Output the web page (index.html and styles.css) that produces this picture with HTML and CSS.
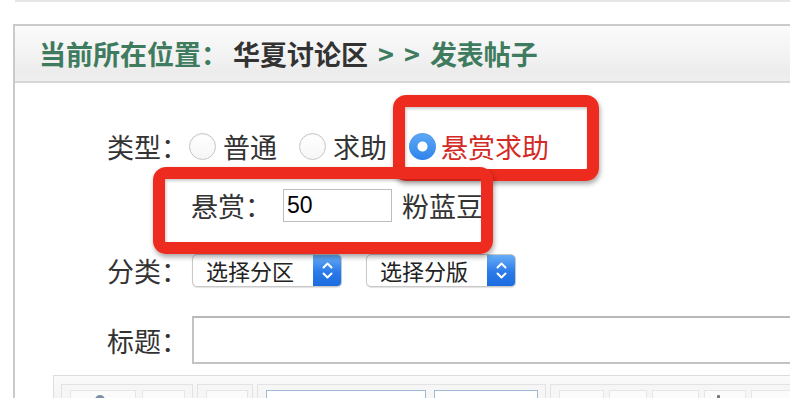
FILE: index.html
```html
<!DOCTYPE html>
<html lang="zh-CN">
<head>
<meta charset="utf-8">
<title>发表帖子</title>
<link rel="stylesheet" href="styles.css">
</head>
<body>
<div class="topbar"></div>
<div class="panel">
  <div class="crumb"><span class="green">当前所在位置：</span><span class="dark">华夏讨论区</span><span class="green sep">&gt;</span><span class="green sep">&gt;</span><span class="green sep">发表帖子</span></div>
  <div class="form">
    <div class="row row-type">
      <span class="label">类型：</span>
      <label class="opt"><span class="radio"></span><span>普通</span></label>
      <label class="opt"><span class="radio"></span><span>求助</span></label>
      <label class="opt opt-on"><span class="radio radio-on"></span><span>悬赏求助</span></label>
    </div>
    <div class="row row-reward">
      <span class="label">悬赏：</span>
      <input class="reward-input" type="text" value="50">
      <span class="unit">粉蓝豆</span>
    </div>
    <div class="row row-cat">
      <span class="label">分类：</span>
      <div class="select">
        <span class="select-text">选择分区</span>
        <span class="select-btn"><svg width="29" height="33" viewBox="0 0 29 33"><path d="M10.5 13.5 L14.5 9.5 L18.5 13.5" fill="none" stroke="#fff" stroke-width="2" stroke-linecap="round" stroke-linejoin="round"/><path d="M10.5 19.5 L14.5 23.5 L18.5 19.5" fill="none" stroke="#fff" stroke-width="2" stroke-linecap="round" stroke-linejoin="round"/></svg></span>
      </div>
      <div class="select select-2">
        <span class="select-text">选择分版</span>
        <span class="select-btn"><svg width="29" height="33" viewBox="0 0 29 33"><path d="M10.5 13.5 L14.5 9.5 L18.5 13.5" fill="none" stroke="#fff" stroke-width="2" stroke-linecap="round" stroke-linejoin="round"/><path d="M10.5 19.5 L14.5 23.5 L18.5 19.5" fill="none" stroke="#fff" stroke-width="2" stroke-linecap="round" stroke-linejoin="round"/></svg></span>
      </div>
    </div>
    <div class="row row-title">
      <span class="label">标题：</span>
      <input class="title-input" type="text" value="">
    </div>
    <div class="toolbar">
      <div class="tgroup tg1">
        <span class="tbtn tb-a"><span class="ticon"></span></span>
        <span class="tbtn tb-b"></span>
      </div>
      <div class="tgroup tg2"><span class="tbtn tb-c"></span></div>
      <div class="tgroup tg3">
        <span class="tsel ts1"></span>
        <span class="tsel ts2"></span>
      </div>
      <div class="tgroup tg4">
        <span class="tbtn tb-s"></span>
        <span class="tbtn tb-s tb-s2"></span>
        <span class="tbtn tb-s tb-s3"></span>
        <span class="tbtn tb-s tb-s4"><span class="tglyph"></span></span>
        <span class="tbtn tb-s tb-s5"></span>
      </div>
    </div>
  </div>
</div>
<div class="mark mark-1"></div>
<div class="mark mark-2"></div>
</body>
</html>
```
FILE: styles.css
```css
html, body {
  margin: 0;
  padding: 0;
  background: #fff;
  overflow: hidden;
}
body {
  width: 790px;
  height: 398px;
  position: relative;
  font-family: "Noto Sans CJK SC", "Liberation Sans", sans-serif;
  color: #333;
}
.topbar {
  margin-left: 15px;
  height: 0;
  border-bottom: 2px solid #e6e6e6;
}
.panel {
  margin-top: 22px;
  margin-left: 13px;
  width: 1000px;
  border: 2px solid #cacaca;
  border-right: none;
  border-bottom: none;
  height: 400px;
}
.crumb {
  height: 55px;
  line-height: 55px;
  padding-left: 24px;
  font-size: 27px;
  font-weight: 700;
  background: linear-gradient(#fbfbfb, #f4f4f4 45%, #ececec 85%, #f0f0f0);
  border-bottom: 2px solid #d6d6d6;
  white-space: nowrap;
}
.crumb .green { color: #3f7b5e; }
.crumb .dark { color: #333; margin-left: 5px; }
.crumb .sep { margin-left: 10px; }
.form {
  padding-top: 43px;
}
.row {
  display: flex;
  align-items: center;
  height: 40px;
  padding-left: 92px;
  font-size: 27px;
}
.label {
  width: 81px;
  flex: none;
  white-space: nowrap;
}
.opt {
  display: flex;
  align-items: center;
  margin-right: 22px;
}
.opt-on { color: #d42a25; margin-right: 0; }
.radio {
  width: 25px;
  height: 25px;
  border-radius: 50%;
  border: 1px solid #c6c6c6;
  background: linear-gradient(#ffffff, #f6f6f6);
  box-shadow: inset 0 1px 1px rgba(0,0,0,0.05);
  margin-left: 1px;
  margin-right: 7px;
  flex: none;
}
.opt + .opt .radio { margin-left: 0; }
.opt-on .radio { margin-left: 2px; }
.radio-on {
  width: 27px;
  height: 27px;
  border: none;
  background: radial-gradient(circle, #fff 0 4.5px, transparent 5.5px), linear-gradient(#5ea9f6, #2f83ea);
  margin-right: 5px;
}
.row-type { margin-bottom: 19px; }
.row-reward {
  padding-left: 176px;
  margin-bottom: 25px;
}
.reward-input {
  margin-left: 11px;
  width: 109px;
  height: 33px;
  box-sizing: border-box;
  border: 1px solid #bdbdbd;
  padding: 0 3px;
  font-family: "Liberation Sans", sans-serif;
  font-size: 23px;
  color: #000;
  outline: none;
}
.unit { margin-left: 10px; }
.row-cat { margin-bottom: 26px; }
.select {
  margin-left: 4px;
  width: 150px;
  height: 33px;
  box-sizing: border-box;
  display: flex;
  align-items: center;
  justify-content: space-between;
  border: 1px solid #c8c8c8;
  border-radius: 5px;
  background: #fff;
  box-shadow: 0 1px 1px rgba(0,0,0,0.12);
  overflow: hidden;
}
.select-2 { margin-left: 24px; }
.select-text {
  font-size: 22px;
  padding-left: 13px;
  color: #222;
  line-height: 31px;
}
.select-btn {
  width: 29px;
  height: 33px;
  margin-right: -1px;
  background: linear-gradient(#6cb0f8, #2a7ae8 55%, #1a6be0);
  display: flex;
}
.row-title {
  height: 48px;
  margin-bottom: 11px;
}
.title-input {
  margin-left: 4px;
  width: 700px;
  height: 48px;
  box-sizing: border-box;
  border: 2px solid #c3c3c3;
  border-top-color: #b8b8b8;
  outline: none;
  font-size: 20px;
}
.toolbar {
  margin-left: 38px;
  height: 40px;
  border: 1px solid #dddddd;
  border-right: none;
  background: linear-gradient(#fafafa, #efefef);
  display: flex;
  gap: 4px;
  padding: 8px 0 0 7px;
}
.tgroup {
  height: 34px;
  border: 1px solid #e3e3e3;
  background: #f6f6f6;
  display: flex;
  gap: 6px;
  padding: 5px 0 0 8px;
  box-sizing: border-box;
}
.tg1 { width: 132px; }
.tg2 { width: 56px; }
.tg3 { width: 289px; gap: 8px; }
.tg4 { width: 300px; gap: 5px; }
.tbtn {
  display: block;
  height: 24px;
  border: 1px solid #e6e6e6;
  background: #fbfbfb;
  position: relative;
}
.tb-a { width: 64px; }
.tb-b { width: 41px; }
.tb-c { width: 40px; }
.tb-s { width: 43px; }
.tb-s2 { width: 36px; }
.tb-s3 { width: 45px; }
.tb-s4 { width: 40px; }
.tb-s5 { width: 42px; }
.ticon {
  position: absolute;
  left: 24px;
  top: 4px;
  width: 10px;
  height: 10px;
  border-radius: 50%;
  background: #7c8fa6;
}
.tglyph {
  position: absolute;
  left: 12px;
  top: 4px;
  width: 3px;
  height: 6px;
  background: #777;
  border-radius: 1px;
}
.tsel {
  display: block;
  height: 24px;
  border: 1px solid #9fb8d6;
  background: #fff;
}
.ts1 { width: 158px; }
.ts2 { width: 102px; }
.mark {
  position: absolute;
  box-sizing: border-box;
  border: 12px solid #ee2b1f;
  border-radius: 13px;
  box-shadow: 1px 3px 5px rgba(0,0,0,0.35), inset 1px 2px 3px rgba(0,0,0,0.2);
}
.mark-1 {
  left: 393px;
  top: 95px;
  width: 206px;
  height: 86px;
}
.mark-2 {
  left: 153px;
  top: 167px;
  width: 340px;
  height: 87px;
}
```
